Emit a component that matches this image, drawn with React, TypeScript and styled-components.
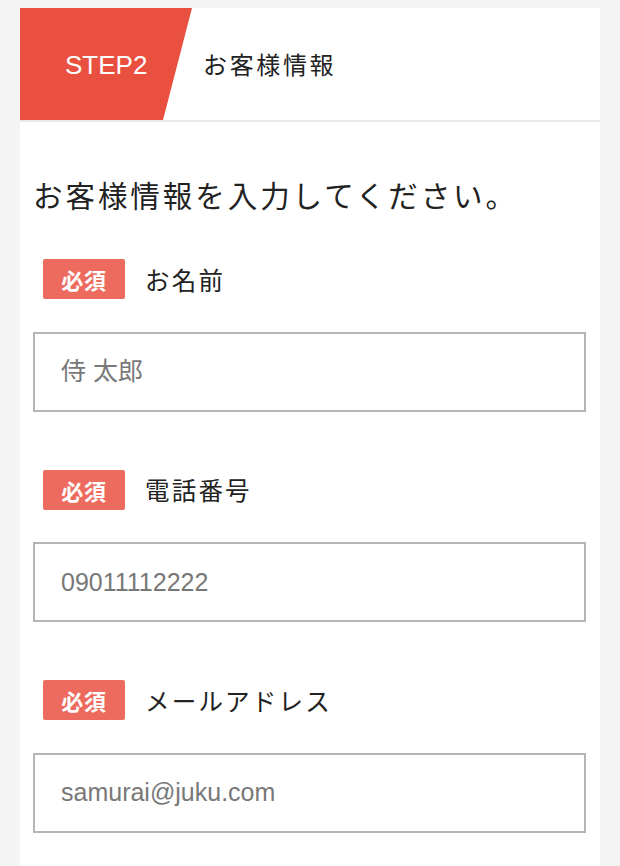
import React from "react";
import styled, { createGlobalStyle } from "styled-components";

const GlobalStyle = createGlobalStyle`
  html, body { margin: 0; padding: 0; background: #f4f4f4; }
  body { font-family: "Noto Sans CJK JP", "Liberation Sans", sans-serif; color: #222; }
  * { box-sizing: border-box; }
`;

const Page = styled.div`
  padding: 8px 20px 0 20px;
  min-height: 100vh;
`;

const Card = styled.div`
  background: #fff;
  min-height: calc(100vh - 8px);
`;

const Header = styled.div`
  display: flex;
  align-items: stretch;
  height: 114px;
  border-bottom: 2px solid #e9e9e9;
`;

const StepBadge = styled.div`
  width: 172px;
  background: #e9503f;
  clip-path: polygon(0 0, 100% 0, 143px 100%, 0 100%);
  color: #fff;
  font-family: "Liberation Sans", Arial, sans-serif;
  font-size: 26px;
  display: flex;
  align-items: center;
  padding-left: 45px;
  padding-top: 2px;
`;

const HeaderTitle = styled.div`
  display: flex;
  align-items: center;
  margin-left: 11px;
  font-size: 24px;
  letter-spacing: 0.11em;
  padding-bottom: 2px;
`;

const Body = styled.div`
  padding: 50px 14px 40px 13px;
`;

const Lead = styled.h2`
  margin: 0;
  height: 44px;
  line-height: 44px;
  font-size: 29.5px;
  font-weight: 400;
  letter-spacing: 0.1em;
  color: #222;
`;

const Field = styled.div<{ $first?: boolean }>`
  margin-top: ${(p) => (p.$first ? "43px" : "58px")};
`;

const LabelRow = styled.div`
  display: flex;
  align-items: center;
  height: 40px;
  padding-left: 10px;
  gap: 20px;
`;

const Required = styled.span`
  display: inline-flex;
  align-items: center;
  justify-content: center;
  width: 82px;
  height: 40px;
  border-radius: 2px;
  background: #ed6b5e;
  color: #fff;
  font-weight: 700;
  font-size: 22px;
  letter-spacing: 0.03em;
`;

const LabelText = styled.span`
  font-size: 24.5px;
  letter-spacing: 0.09em;
  color: #222;
`;

const Input = styled.input`
  display: block;
  width: 100%;
  height: 80px;
  margin-top: 32.5px;
  border: 2px solid #b5b5b5;
  border-radius: 0;
  padding: 0 26px;
  font-family: "Liberation Sans", "Noto Sans CJK JP", sans-serif;
  font-size: 25px;
  color: #222;
  background: #fff;
  outline: none;
  &::placeholder {
    color: #787878;
    opacity: 1;
  }
`;

const fields = [
  { label: "お名前", placeholder: "侍 太郎", type: "text" },
  { label: "電話番号", placeholder: "09011112222", type: "tel" },
  { label: "メールアドレス", placeholder: "samurai@juku.com", type: "email" },
];

export default function App() {
  return (
    <>
      <GlobalStyle />
      <Page>
        <Card>
          <Header>
            <StepBadge>STEP2</StepBadge>
            <HeaderTitle>お客様情報</HeaderTitle>
          </Header>
          <Body>
            <Lead>お客様情報を入力してください。</Lead>
            {fields.map((f, i) => (
              <Field key={f.label} $first={i === 0}>
                <LabelRow>
                  <Required>必須</Required>
                  <LabelText>{f.label}</LabelText>
                </LabelRow>
                <Input type={f.type} placeholder={f.placeholder} />
              </Field>
            ))}
          </Body>
        </Card>
      </Page>
    </>
  );
}
